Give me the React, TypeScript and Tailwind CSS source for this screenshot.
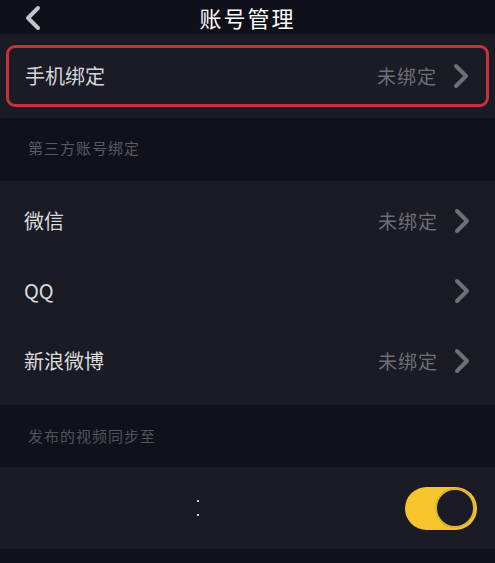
import React from "react";

const font = { fontFamily: '"Noto Sans CJK SC", "Noto Sans", sans-serif' };

function Chevron() {
  return (
    <svg width="18" height="26" viewBox="0 0 18 26" className="shrink-0">
      <path
        d="M4 3 L14 13 L4 23"
        fill="none"
        stroke="#6f6f75"
        strokeWidth="4"
        strokeLinecap="round"
        strokeLinejoin="round"
      />
    </svg>
  );
}

function Row({ label, value }: { label: string; value?: string }) {
  return (
    <div className="flex items-center h-[70px] pl-6 pr-[24px]">
      <span className="text-[20px] text-[#dcdcdf] flex-1">{label}</span>
      {value && <span className="text-[19px] text-[#6e6f75] mr-[15px] tracking-[1px]">{value}</span>}
      <Chevron />
    </div>
  );
}

export default function App() {
  return (
    <div className="w-[495px] h-[563px] bg-[#10111a] overflow-hidden" style={font}>
      {/* Header */}
      <header className="relative h-[34px] flex items-center justify-center bg-[#0f1019]">
        <svg width="18" height="26" viewBox="0 0 18 26" className="absolute left-[24px] top-[5px]">
          <path
            d="M14 3 L4 13 L14 23"
            fill="none"
            stroke="#c4c4c8"
            strokeWidth="4"
            strokeLinecap="round"
            strokeLinejoin="round"
          />
        </svg>
        <h1 className="text-[22px] text-white leading-none tracking-[2px]">账号管理</h1>
      </header>

      {/* Phone binding */}
      <div className="bg-[#1a1b24] h-[84px] px-[6px] pt-[11px]">
        <div className="h-[62px] rounded-[9px] border-[3px] border-[#c8303e] flex items-center pl-[16px] pr-[16px]">
          <span className="text-[20px] text-[#d6d6da] flex-1">手机绑定</span>
          <span className="text-[19px] text-[#6e6f75] mr-[15px] tracking-[1px]">未绑定</span>
          <Chevron />
        </div>
      </div>

      {/* Third party */}
      <div className="h-[63px] flex items-center pl-[28px] pb-[2px] bg-[#10111a]">
        <span className="text-[15px] text-[#5a5b63] tracking-[1px]">第三方账号绑定</span>
      </div>
      <div className="bg-[#1a1b24] h-[224px] pt-[5px] flex flex-col">
        <Row label="微信" value="未绑定" />
        <Row label="QQ" />
        <Row label="新浪微博" value="未绑定" />
      </div>

      {/* Sync */}
      <div className="h-[62px] flex items-center pl-[28px] bg-[#10111a]">
        <span className="text-[15px] text-[#52535b] tracking-[1px]">发布的视频同步至</span>
      </div>
      <div className="bg-[#1a1b24] h-[82px] flex items-center pr-[18px]">
        <div className="flex-1 flex pl-[197px]">
          <div className="flex flex-col gap-[12px]">
            <span className="w-[2px] h-[2px] bg-[#cfcfd2]" />
            <span className="w-[2px] h-[2px] bg-[#cfcfd2]" />
          </div>
        </div>
        <div className="w-[72px] h-[43px] rounded-full bg-[#f6c52c] flex items-center justify-end p-[2px]">
          <div className="w-[40px] h-[40px] rounded-full bg-[#1a1b24] border-[2px] border-[#d9b437]" />
        </div>
      </div>
    </div>
  );
}
